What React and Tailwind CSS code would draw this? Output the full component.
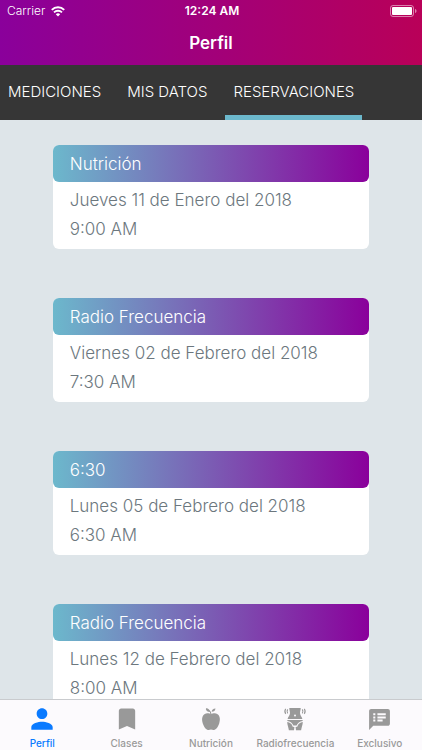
import React, { useState } from 'react';
import { MdPerson, MdBookmark, MdSpeakerNotes } from 'react-icons/md';

const sections = ['MEDICIONES', 'MIS DATOS', 'RESERVACIONES'];

const reservations = [
  { id: 1, title: 'Nutrición', date: 'Jueves 11 de Enero del 2018', time: '9:00 AM' },
  { id: 2, title: 'Radio Frecuencia', date: 'Viernes 02 de Febrero del 2018', time: '7:30 AM' },
  { id: 3, title: '6:30', date: 'Lunes 05 de Febrero del 2018', time: '6:30 AM' },
  { id: 4, title: 'Radio Frecuencia', date: 'Lunes 12 de Febrero del 2018', time: '8:00 AM' },
];

function WifiIcon() {
  return (
    <svg width="14" height="11" viewBox="0 0 14 11" fill="none" stroke="#fff" aria-hidden="true">
      <path d="M0.8 3.9a8.8 8.8 0 0 1 12.4 0" strokeWidth="2" />
      <path d="M3 6.4a5.7 5.7 0 0 1 8 0" strokeWidth="1.8" />
      <path d="M7 10.6 4.8 8.3a3.1 3.1 0 0 1 4.4 0z" fill="#fff" stroke="none" />
    </svg>
  );
}

function BatteryIcon() {
  return (
    <svg width="27" height="12" viewBox="0 0 27 12" aria-hidden="true">
      <rect x="0.5" y="0.5" width="23" height="11" rx="2.5" fill="none" stroke="#fff" strokeOpacity="0.5" />
      <rect x="2" y="2" width="20" height="8" rx="1" fill="#fff" />
      <path d="M25 4v4c1-.4 1.5-1.1 1.5-2S26 4.4 25 4z" fill="#fff" fillOpacity="0.5" />
    </svg>
  );
}

function AppleIcon() {
  return (
    <svg width="22" height="24" viewBox="0 0 22 24" fill="currentColor" aria-hidden="true">
      <path d="M11 7.3C12.5 6.4 15.4 5.7 17.6 7.3c2.7 2 2.7 5.9 1.6 9.1-1.2 3.6-3.5 6.6-5.9 6.6-.9 0-1.5-.4-2.3-.4s-1.4.4-2.3.4c-2.4 0-4.7-3-5.9-6.6-1.1-3.2-1.1-7.1 1.6-9.1C6.6 5.700 9.500 6.400 11 7.300z" />
      <path d="M11.5 6.900C11.100 4.200 9.300 2.200 6.600.9L5.800 2c.4 2 2 2.900 4.100 3l.4 1.900z" />
      <path d="M11.6 4.800c.2-2 1.500-3.300 3.900-3.300-.2 2-1.500 3.300-3.900 3.300z" />
    </svg>
  );
}

function WaistIcon() {
  return (
    <svg width="24" height="24" viewBox="0 0 24 24" aria-hidden="true">
      <path
        fill="currentColor"
        d="M6.300 1h11.400c.1 1.900-.7 3.300-.7 5 0 2.100 1.800 3.600 2.400 6H4.600c.6-2.400 2.400-3.900 2.400-6 0-1.700-.8-3.100-.7-5z"
      />
      <circle cx="12" cy="8.600" r="1" fill="#fcfafd" />
      <path fill="currentColor" d="M4.400 12.900h15.200l.1 1c-2.900.4-5.300 2.200-6.100 4.600h-3.200c-.8-2.400-3.200-4.200-6.100-4.600z" />
      <path
        fill="currentColor"
        d="M4.200 15c2.700.4 4.900 2.100 5.400 4.400.1.400 1 .4 1.800.5L11 23.200H5.900C5.500 20.400 4.200 17.800 4.200 15zM19.800 15c-2.700.4-4.900 2.100-5.400 4.400-.1.400-1 .4-1.800.5l.4 3.300h5.100c.4-2.800 1.700-5.400 1.700-8.200z"
      />
      <g fill="none" stroke="currentColor" strokeWidth="1.100">
        <path d="M2.700 1.900a4.400 4.400 0 0 0 0 5M21.300 1.900a4.400 4.400 0 0 1 0 5" />
        <path d="M4.700 2.400a3.600 3.600 0 0 0 0 4M19.300 2.400a3.600 3.600 0 0 1 0 4" />
      </g>
    </svg>
  );
}

const tabs = [
  { name: 'Perfil', icon: <MdPerson size={32} /> },
  { name: 'Clases', icon: <MdBookmark size={28} /> },
  { name: 'Nutrición', icon: <AppleIcon /> },
  { name: 'Radiofrecuencia', icon: <WaistIcon /> },
  { name: 'Exclusivo', icon: <MdSpeakerNotes size={25} /> },
];

function ReservationCard({ title, date, time }) {
  return (
    <article className="bg-white rounded-md">
      <h2 className="h-[37px] flex items-center px-[17px] pt-0.5 rounded-md bg-linear-to-r/srgb from-[#6cb8cc] to-[#8a009b] text-white">
        {title}
      </h2>
      <div className="px-[17px] pt-1 pb-[5px] leading-[29px] text-[#6c777e]">
        <p>{date}</p>
        <p>{time}</p>
      </div>
    </article>
  );
}

export default function App() {
  const [section, setSection] = useState('RESERVACIONES');
  const [tab, setTab] = useState('Perfil');

  return (
    <div className="h-screen flex flex-col bg-[#dee5e9] font-['Inter',sans-serif]">
      <header className="shrink-0 bg-linear-to-r/srgb from-[#8a009b] to-[#b90058] text-white">
        {/* Barra de estado */}
        <div className="h-[21px] pt-px pl-[7px] pr-[5px] grid grid-cols-3 items-center text-[12px]">
          <span className="flex items-center gap-[6px] font-light">
            Carrier
            <WifiIcon />
          </span>
          <span className="text-center font-semibold">12:24 AM</span>
          <span className="flex justify-end">
            <BatteryIcon />
          </span>
        </div>
        <h1 className="h-11 pt-0.5 flex items-center justify-center text-[17px] font-semibold">Perfil</h1>
      </header>

      <nav className="h-[55px] shrink-0 flex gap-[10px] bg-[#363636] text-[15px] font-light text-white">
        {sections.map((name) => (
          <button
            key={name}
            type="button"
            onClick={() => setSection(name)}
            className={`px-2 pt-1 border-b-5 ${section === name ? 'border-[#6cb8cc]' : 'border-transparent'}`}
          >
            {name}
          </button>
        ))}
      </nav>

      <main className="flex-1 min-h-0 overflow-hidden">
        <div className="w-3/4 mx-auto pt-[25px] flex flex-col gap-[49px] text-[17px] font-light">
          {reservations.map((item) => (
            <ReservationCard key={item.id} title={item.title} date={item.date} time={item.time} />
          ))}
        </div>
      </main>

      {/* Navegación inferior */}
      <nav className="shrink-0 h-[51px] grid grid-cols-5 bg-[#fcfafd] border-t border-[#c9cbce]">
        {tabs.map(({ name, icon }) => (
          <button
            key={name}
            type="button"
            onClick={() => setTab(name)}
            className={`flex flex-col items-center justify-start pt-px text-[10px] font-medium leading-3 whitespace-nowrap ${
              tab === name ? 'text-[#0a7aff]' : 'text-[#999]'
            }`}
          >
            <span className="h-9 flex items-center justify-center">{icon}</span>
            {name}
          </button>
        ))}
      </nav>
    </div>
  );
}
